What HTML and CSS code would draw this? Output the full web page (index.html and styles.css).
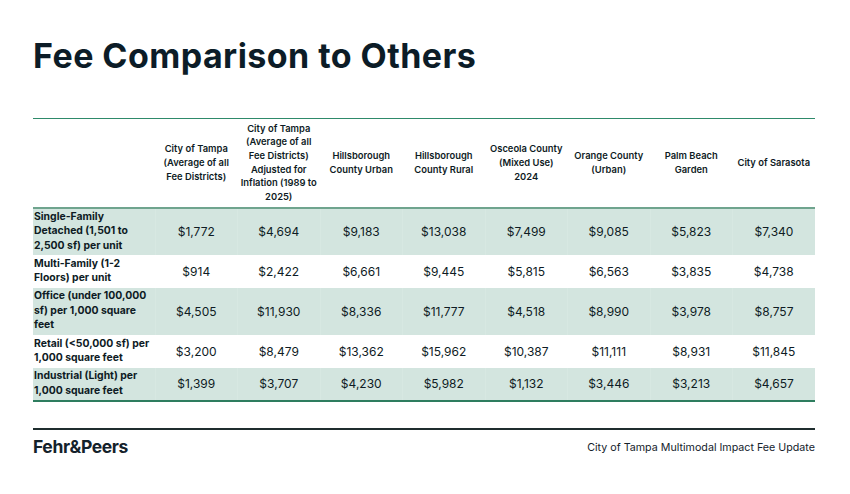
FILE: index.html
```html
<!DOCTYPE html>
<html lang="en">
<head>
<meta charset="utf-8">
<title>Fee Comparison to Others</title>
<link rel="stylesheet" href="styles.css">
</head>
<body>
<div class="slide">
  <h1 class="title">Fee Comparison to Others</h1>
  <table class="fees">
    <colgroup>
      <col class="c-label">
      <col class="c-val"><col class="c-val"><col class="c-val"><col class="c-val">
      <col class="c-val"><col class="c-val"><col class="c-val"><col class="c-val">
    </colgroup>
    <thead>
      <tr>
        <th></th>
        <th>City of Tampa (Average of all Fee Districts)</th>
        <th>City of Tampa (Average of all Fee Districts) Adjusted for Inflation (1989 to 2025)</th>
        <th>Hillsborough County Urban</th>
        <th>Hillsborough County Rural</th>
        <th>Osceola County (Mixed Use) 2024</th>
        <th>Orange County (Urban)</th>
        <th>Palm Beach Garden</th>
        <th>City of Sarasota</th>
      </tr>
    </thead>
    <tbody>
      <tr class="shade r3">
        <td class="lbl">Single-Family Detached (1,501 to 2,500 sf) per unit</td>
        <td>$1,772</td><td>$4,694</td><td>$9,183</td><td>$13,038</td><td>$7,499</td><td>$9,085</td><td>$5,823</td><td>$7,340</td>
      </tr>
      <tr class="r2">
        <td class="lbl">Multi-Family (1-2 Floors) per unit</td>
        <td>$914</td><td>$2,422</td><td>$6,661</td><td>$9,445</td><td>$5,815</td><td>$6,563</td><td>$3,835</td><td>$4,738</td>
      </tr>
      <tr class="shade r3">
        <td class="lbl">Office (under 100,000 sf) per 1,000 square feet</td>
        <td>$4,505</td><td>$11,930</td><td>$8,336</td><td>$11,777</td><td>$4,518</td><td>$8,990</td><td>$3,978</td><td>$8,757</td>
      </tr>
      <tr class="r2">
        <td class="lbl">Retail (&lt;50,000 sf) per 1,000 square feet</td>
        <td>$3,200</td><td>$8,479</td><td>$13,362</td><td>$15,962</td><td>$10,387</td><td>$11,111</td><td>$8,931</td><td>$11,845</td>
      </tr>
      <tr class="shade r2 last">
        <td class="lbl">Industrial (Light) per 1,000 square feet</td>
        <td>$1,399</td><td>$3,707</td><td>$4,230</td><td>$5,982</td><td>$1,132</td><td>$3,446</td><td>$3,213</td><td>$4,657</td>
      </tr>
    </tbody>
  </table>
  <footer class="foot">
    <div class="logo">Fehr&amp;Peers</div>
    <div class="foot-title">City of Tampa Multimodal Impact Fee Update</div>
  </footer>
</div>
</body>
</html>
```
FILE: styles.css
```css
html, body {
  margin: 0;
  padding: 0;
  background: #ffffff;
}
.slide {
  width: 850px;
  height: 494px;
  box-sizing: border-box;
  padding: 36px 35px 0 33px;
  font-family: Inter, "Noto Sans", sans-serif;
  color: #0e1b24;
  display: flex;
  flex-direction: column;
}
.title {
  margin: 0;
  font-size: 34px;
  line-height: 40px;
  font-weight: 700;
  letter-spacing: 0.45px;
  color: #0c1c27;
}
.fees {
  margin-top: 42px;
  width: 782px;
  border-collapse: collapse;
  table-layout: fixed;
}
.c-label { width: 122px; }
.c-val { width: 82.5px; }
.fees thead tr {
  border-top: 1px solid #2e8a6a;
  border-bottom: 2px solid #6fa48e;
  height: 89px;
}
.fees th {
  font-size: 9.4px;
  line-height: 13.7px;
  font-weight: 600;
  text-align: center;
  vertical-align: middle;
  padding: 0 2px;
  color: #0e1b24;
}
.fees td {
  font-size: 12px;
  text-align: center;
  vertical-align: middle;
  padding: 0;
  color: #0e1b24;
}
.fees td.lbl {
  text-align: left;
  font-size: 10.4px;
  line-height: 14.5px;
  font-weight: 700;
  padding: 1px 2px 1px 1px;
}
.fees tr.r3 { height: 47px; }
.fees tr.r2 { height: 33px; }
.fees tr.shade td {
  background: #d3e5df;
  border-left: 1px solid #d7e8e2;
}
.fees tr.shade td:first-child { border-left: none; }
.fees tr.last { border-bottom: 2px solid #2e7d5f; }
.foot {
  margin-top: 26px;
  border-top: 2px solid #1f2d2e;
  display: flex;
  justify-content: space-between;
  align-items: center;
  padding-top: 6px;
}
.logo {
  font-size: 17.5px;
  font-weight: 700;
  letter-spacing: -0.4px;
  color: #14222b;
}
.foot-title {
  font-size: 10.7px;
  color: #14222b;
  padding-top: 2px;
}
```
